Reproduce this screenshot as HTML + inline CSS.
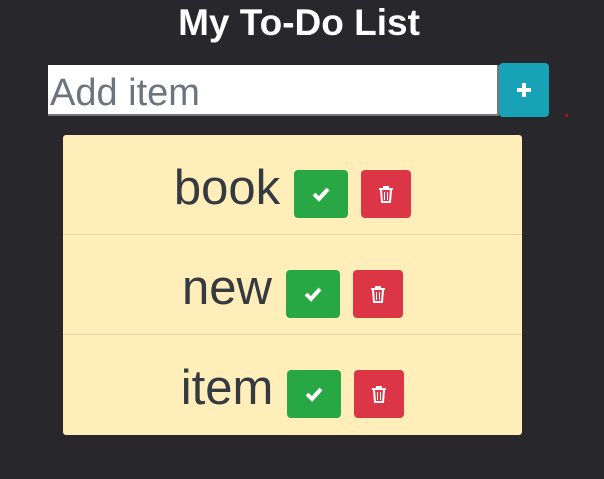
<!DOCTYPE html>
<html><head><style>
body{margin:0;width:604px;height:479px;background:#28272c;font-family:"Liberation Sans",sans-serif;position:relative;overflow:hidden}
h1{position:absolute;top:0;left:0;width:598px;margin:0;text-align:center;color:#fff;font-size:37px;font-weight:bold;line-height:46px}
.inp{position:absolute;left:48px;top:65px;background:#fff;border-bottom:2px solid #767676;border-right:2px solid #767676;color:#6c757d;font-size:38px;line-height:56px;padding-left:2px;box-sizing:border-box;width:451px;height:51px}
.add{position:absolute;left:499px;top:63px;width:50px;height:54px;background:#17a2b8;border-radius:4px}
.dot{position:absolute;left:565px;top:114px;width:3px;height:3px;border-radius:50%;background:#d00}
.card{position:absolute;left:63px;top:135px;width:459px;height:300px;background:#ffeeba;border-radius:3px}
.row{height:100px;border-bottom:1px solid #e6d6a6;display:flex;align-items:center;justify-content:center;box-sizing:border-box}
.row:last-child{border-bottom:none}
.t{font-size:49px;color:#343a40;margin-right:14px;line-height:48px;margin-top:6px}
.g{width:54px;height:48px;background:#28a745;border-radius:4px;margin-right:13px;display:flex;align-items:center;justify-content:center;margin-top:18px}
.r{width:50px;height:48px;background:#dc3545;border-radius:4px;display:flex;align-items:center;justify-content:center;margin-top:18px}
</style></head><body>
<h1>My To-Do List</h1>
<div class="inp">Add item</div>
<div class="add"><svg width="50" height="54"><path d="M25 20v14M18 27h14" stroke="#fff" stroke-width="4"/></svg></div>
<div class="dot"></div>
<div class="card">
<div class="row"><span class="t">book</span><span class="g"><svg width="20" height="16"><path d="M3 8l5 5 9-10" stroke="#fff" stroke-width="4" fill="none"/></svg></span><span class="r"><svg width="16" height="18"><path d="M1 4h14M6 4V2h4v2M3 5l1 12h8l1-12" stroke="#fff" stroke-width="2" fill="none"/><path d="M6.5 7v8M9.5 7v8" stroke="#fff" stroke-width="1"/></svg></span></div>
<div class="row"><span class="t">new</span><span class="g"><svg width="20" height="16"><path d="M3 8l5 5 9-10" stroke="#fff" stroke-width="4" fill="none"/></svg></span><span class="r"><svg width="16" height="18"><path d="M1 4h14M6 4V2h4v2M3 5l1 12h8l1-12" stroke="#fff" stroke-width="2" fill="none"/><path d="M6.5 7v8M9.5 7v8" stroke="#fff" stroke-width="1"/></svg></span></div>
<div class="row"><span class="t">item</span><span class="g"><svg width="20" height="16"><path d="M3 8l5 5 9-10" stroke="#fff" stroke-width="4" fill="none"/></svg></span><span class="r"><svg width="16" height="18"><path d="M1 4h14M6 4V2h4v2M3 5l1 12h8l1-12" stroke="#fff" stroke-width="2" fill="none"/><path d="M6.5 7v8M9.5 7v8" stroke="#fff" stroke-width="1"/></svg></span></div>
</div>
</body></html>
